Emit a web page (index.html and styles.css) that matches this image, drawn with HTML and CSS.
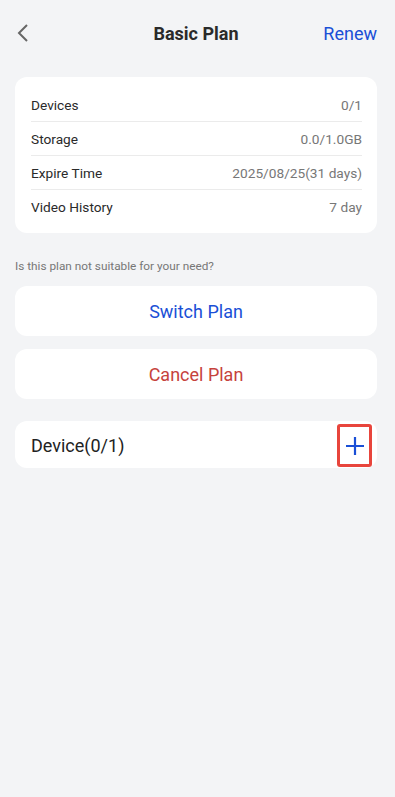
FILE: index.html
```html
<!DOCTYPE html>
<html>
<head>
<meta charset="utf-8">
<link rel="stylesheet" href="styles.css">
</head>
<body>
<div class="page">
  <header class="topbar">
    <span class="back">
      <svg width="14" height="20" viewBox="0 0 14 20"><path d="M11 2 L3 10 L11 18" fill="none" stroke="#666" stroke-width="2"/></svg>
    </span>
    <h1 class="title">Basic Plan</h1>
    <span class="renew">Renew</span>
  </header>

  <section class="card info">
    <div class="row"><span>Devices</span><span class="val">0/1</span></div>
    <div class="row"><span>Storage</span><span class="val">0.0/1.0GB</span></div>
    <div class="row"><span>Expire Time</span><span class="val">2025/08/25(31 days)</span></div>
    <div class="row"><span>Video History</span><span class="val">7 day</span></div>
  </section>

  <p class="hint">Is this plan not suitable for your need?</p>

  <div class="card btn switch">Switch Plan</div>
  <div class="card btn cancel">Cancel Plan</div>

  <section class="card device">
    <span class="device-label">Device(0/1)</span>
    <span class="add">
      <svg width="20" height="20" viewBox="0 0 20 20"><path d="M10 1 V19 M1 10 H19" stroke="#1a4fd6" stroke-width="2.2"/></svg>
    </span>
  </section>
</div>
</body>
</html>
```
FILE: styles.css
```css
html, body {
  margin: 0;
  padding: 0;
  background: #f3f4f6;
}
body {
  font-family: Roboto, "Noto Sans", "Liberation Sans", sans-serif;
  color: #222;
}
.page {
  padding: 0 18px 0 15px;
  display: flex;
  flex-direction: column;
}
.topbar {
  height: 68px;
  display: flex;
  align-items: center;
  justify-content: space-between;
  position: relative;
}
.back {
  width: 40px;
  display: flex;
  align-items: center;
  padding-left: 1px;
  margin-top: -3px;
}
.title {
  margin: 0;
  font-size: 18px;
  font-weight: 700;
  color: #2a2a2a;
  position: absolute;
  left: 0;
  right: 0;
  text-align: center;
  pointer-events: none;
  margin-top: -2px;
}
.renew {
  font-size: 18px;
  color: #1a4fd6;
  margin-top: -2px;
}
.card {
  background: #fff;
  border-radius: 12px;
}
.info {
  margin-top: 9px;
  padding: 11px 15px 10px 16px;
  display: flex;
  flex-direction: column;
}
.row {
  display: flex;
  justify-content: space-between;
  align-items: center;
  height: 33px;
  font-size: 13.7px;
  color: #2a2a2a;
  border-bottom: 1px solid #ebebeb;
}
.row:last-child {
  border-bottom: none;
}
.row .val {
  color: #777;
}
.hint {
  margin: 25px 0 0 0;
  font-size: 11.8px;
  color: #777;
  line-height: 16px;
}
.btn {
  height: 50px;
  display: flex;
  align-items: center;
  justify-content: center;
  font-size: 18px;
}
.switch {
  margin-top: 12px;
  color: #1a4fd6;
}
.cancel {
  margin-top: 13px;
  color: #c6423c;
}
.device {
  margin-top: 22px;
  height: 47px;
  display: flex;
  align-items: center;
  justify-content: space-between;
  padding: 0 5px 0 16px;
  font-size: 18px;
  color: #222;
}
.device-label {
  padding-top: 2px;
}
.add {
  width: 29px;
  height: 37px;
  border: 3px solid #e8453c;
  border-radius: 3px;
  display: flex;
  align-items: center;
  justify-content: center;
  margin-top: 2px;
}
```
